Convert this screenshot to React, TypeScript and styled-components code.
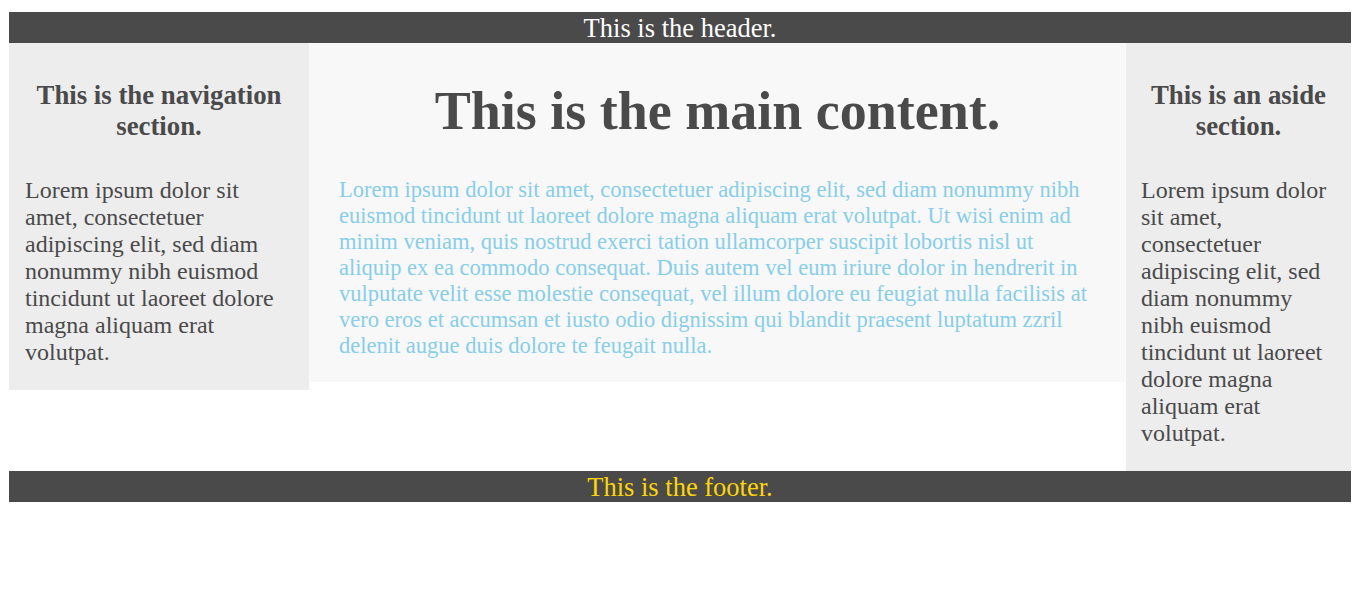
import React from "react";
import styled, { createGlobalStyle } from "styled-components";

const GlobalStyle = createGlobalStyle`
  html, body {
    margin: 0;
    padding: 0;
    background: #ffffff;
  }
  body {
    padding: 12px 6px 0 9px;
    font-family: "Liberation Serif", "Times New Roman", serif;
  }
`;

const Page = styled.div`
  display: flex;
  flex-direction: column;
`;

const Bar = styled.div<{ $color: string }>`
  background: #4a4a4a;
  color: ${(p) => p.$color};
  text-align: center;
  font-size: 26.5px;
  line-height: 30px;
  height: 31px;
  padding-top: 1px;
  box-sizing: border-box;
`;

const Row = styled.div`
  display: flex;
  align-items: flex-start;
`;

const Column = styled.div<{ $width?: number; $bg: string; $pad: number }>`
  ${(p) => (p.$width ? `width: ${p.$width}px; flex: none;` : "flex: 1; min-width: 0;")}
  background: ${(p) => p.$bg};
  padding: 0 ${(p) => p.$pad}px;
  box-sizing: border-box;
`;

const SideHeading = styled.h3`
  margin: 37px 0 0;
  font-size: 26.8px;
  line-height: 31px;
  font-weight: bold;
  text-align: center;
  color: #4a4a4a;
`;

const MainHeading = styled.h1`
  margin: 37px 0 0;
  font-size: 54px;
  line-height: 62px;
  font-weight: bold;
  text-align: center;
  color: #4a4a4a;
`;

const Text = styled.p<{ $color: string; $size: number; $lh: number; $top: number }>`
  margin: ${(p) => p.$top}px 0 ${(p) => p.$size}px;
  font-size: ${(p) => p.$size}px;
  line-height: ${(p) => p.$lh}px;
  color: ${(p) => p.$color};
`;

const SHORT =
  "Lorem ipsum dolor sit amet, consectetuer adipiscing elit, sed diam nonummy nibh euismod tincidunt ut laoreet dolore magna aliquam erat volutpat.";

const LONG =
  "Lorem ipsum dolor sit amet, consectetuer adipiscing elit, sed diam nonummy nibh euismod tincidunt ut laoreet dolore magna aliquam erat volutpat. Ut wisi enim ad minim veniam, quis nostrud exerci tation ullamcorper suscipit lobortis nisl ut aliquip ex ea commodo consequat. Duis autem vel eum iriure dolor in hendrerit in vulputate velit esse molestie consequat, vel illum dolore eu feugiat nulla facilisis at vero eros et accumsan et iusto odio dignissim qui blandit praesent luptatum zzril delenit augue duis dolore te feugait nulla.";

export default function App() {
  return (
    <>
      <GlobalStyle />
      <Page>
        <Bar $color="#ffffff">This is the header.</Bar>
        <Row>
          <Column $width={300} $bg="#ededed" $pad={16}>
            <SideHeading>This is the navigation section.</SideHeading>
            <Text $color="#4a4a4a" $size={24} $lh={27} $top={35}>
              {SHORT}
            </Text>
          </Column>
          <Column $bg="#f8f8f8" $pad={30}>
            <MainHeading>This is the main content.</MainHeading>
            <Text $color="#87ceeb" $size={22.5} $lh={26} $top={35}>
              {LONG}
            </Text>
          </Column>
          <Column $width={225} $bg="#ededed" $pad={15}>
            <SideHeading>This is an aside section.</SideHeading>
            <Text $color="#4a4a4a" $size={24} $lh={27} $top={35}>
              {SHORT}
            </Text>
          </Column>
        </Row>
        <Bar $color="#ffd700">This is the footer.</Bar>
      </Page>
    </>
  );
}
